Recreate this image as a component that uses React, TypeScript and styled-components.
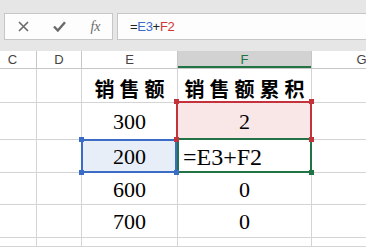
import React from 'react';
import styled, {createGlobalStyle} from 'styled-components';

const GlobalStyle = createGlobalStyle`
  html, body {
    margin: 0;
    padding: 0;
    background: #fff;
    overflow: hidden;
  }
  body {
    font-family: "Liberation Sans", Arial, sans-serif;
  }
`;

const Window = styled.div`
  width: 366px;
  height: 247px;
  overflow: hidden;
  display: flex;
  flex-direction: column;
  background: #fff;
`;

const FormulaBar = styled.div`
  display: flex;
  gap: 4px;
  padding: 13px 0 11px 4px;
  background: #e6e6e6;
`;

const IconBox = styled.div`
  width: 109px;
  height: 27px;
  box-sizing: border-box;
  border: 1px solid #c6c6c6;
  background: #fdfdfd;
  display: flex;
  align-items: center;
  gap: 24px;
  padding-left: 12px;
`;

const IconSlot = styled.span<{ $w: number }>`
  width: ${p => p.$w}px;
  display: flex;
  align-items: center;
  justify-content: center;
  color: #6a6a6a;
`;

const Fx = styled.span`
  font-family: "Liberation Serif", "Times New Roman", serif;
  font-style: italic;
  font-size: 14px;
  color: #6a6a6a;
`;

const FormulaInput = styled.div`
  flex: 1;
  height: 27px;
  box-sizing: border-box;
  border: 1px solid #c6c6c6;
  border-right: none;
  background: #fdfdfd;
  display: flex;
  align-items: center;
  padding-left: 12px;
  font-size: 13px;
  letter-spacing: -0.3px;
  color: #222;
`;

const Ref = styled.span<{ $color: string }>`
  color: ${p => p.$color};
`;

const Sheet = styled.div`
  display: grid;
  grid-template-columns: 48px 45px 96px 134px 100px;
  grid-template-rows: 18px 34px 37px 33px 32px 33px 1fr;
  margin-left: -11px;
  flex: 1;
`;

const ColHeader = styled.div<{ $active?: boolean }>`
  box-sizing: border-box;
  display: flex;
  align-items: center;
  justify-content: center;
  font-size: 13px;
  color: ${p => (p.$active ? '#217346' : '#444')};
  background: ${p => (p.$active ? '#d2d2d2' : '#fff')};
  border-right: 1px solid #c6c6c6;
  border-bottom: 1px solid #c6c6c6;
  box-shadow: ${p => (p.$active ? 'inset 0 -2px 0 #217346' : 'none')};
`;

const Cell = styled.div<{ $fill?: string; $edit?: boolean; $head?: boolean }>`
  position: relative;
  box-sizing: border-box;
  display: flex;
  align-items: center;
  justify-content: ${p => (p.$edit ? 'flex-start' : 'center')};
  padding: ${p => (p.$head ? '5px 0 0 5px' : p.$edit ? '2px 0 0 5px' : '2px 0 0 0')};
  background: ${p => p.$fill || '#fff'};
  border-right: 1px solid #d4d4d4;
  border-bottom: 1px solid #d4d4d4;
  font-family: ${p =>
    p.$head
      ? '"Liberation Serif", "Noto Sans CJK SC", serif'
      : '"Liberation Serif", "Times New Roman", serif'};
  font-weight: ${p => (p.$head ? 700 : 400)};
  font-size: ${p => (p.$head ? '20px' : p.$edit ? '24px' : '22px')};
  letter-spacing: ${p => (p.$head ? '5px' : 'normal')};
  color: #000;
  white-space: nowrap;
`;

const Selection = styled.div<{ $color: string; $t: number; $l: number; $r: number; $b: number }>`
  position: absolute;
  top: ${p => p.$t}px;
  left: ${p => p.$l}px;
  right: ${p => p.$r}px;
  bottom: ${p => p.$b}px;
  border: 2px solid ${p => p.$color};
  pointer-events: none;
`;

const Handle = styled.span<{ $color: string; $corner: 'tl' | 'tr' | 'bl' | 'br'; $z: number }>`
  position: absolute;
  width: 5px;
  height: 5px;
  background: ${p => p.$color};
  z-index: ${p => p.$z};
  ${p => (p.$corner[0] === 't' ? 'top: -4px;' : 'bottom: -4px;')}
  ${p => (p.$corner[1] === 'l' ? 'left: -4px;' : 'right: -4px;')}
`;

const RED = '#c4323c';
const BLUE = '#3a6cc6';
const GREEN = '#217346';

type Sel = { color: string; t: number; l: number; r: number; b: number; corners: ('tl' | 'tr' | 'bl' | 'br')[]; z: number };

const redSel: Sel = { color: RED, t: -2, l: -2, r: -1, b: -1, corners: ['tl', 'tr', 'bl', 'br'], z: 6 };
const blueSel: Sel = { color: BLUE, t: -1, l: -1, r: 0, b: -1, corners: ['tl', 'tr', 'bl', 'br'], z: 5 };
const greenSel: Sel = { color: GREEN, t: -2, l: -1, r: -1, b: -1, corners: ['br'], z: 7 };

type Row = { e: string; f: string; head?: boolean; eFill?: string; fFill?: string; eSel?: Sel; fSel?: Sel; edit?: boolean };

const rows: Row[] = [
    { e: '销售额', f: '销售额累积', head: true },
    { e: '300', f: '2', fFill: '#f9e7e8', fSel: redSel },
    { e: '200', f: '=E3+F2', eFill: '#e8eef8', eSel: blueSel, fSel: greenSel, edit: true },
    { e: '600', f: '0' },
    { e: '700', f: '0' },
    { e: '', f: '' },
];

const SelBox = ({ s }: { s: Sel }) => (
    <Selection $color={s.color} $t={s.t} $l={s.l} $r={s.r} $b={s.b}>
        {s.corners.map(c => (
            <Handle key={c} $color={s.color} $corner={c} $z={s.z} />
        ))}
    </Selection>
);

const App = () => {
    return (
        <Window>
            <GlobalStyle/>
            <FormulaBar>
                <IconBox>
                    <IconSlot $w={12}>
                        <svg width="11" height="11" viewBox="0 0 11 11">
                            <path d="M1 1 L10 10 M10 1 L1 10" stroke="#6a6a6a" strokeWidth="1.6" fill="none"/>
                        </svg>
                    </IconSlot>
                    <IconSlot $w={13}>
                        <svg width="13" height="11" viewBox="0 0 13 11">
                            <path d="M1 5.5 L4.8 9.5 L12 1.2" stroke="#6a6a6a" strokeWidth="2.4" fill="none"/>
                        </svg>
                    </IconSlot>
                    <IconSlot $w={11}>
                        <Fx>fx</Fx>
                    </IconSlot>
                </IconBox>
                <FormulaInput>
                    =<Ref $color={BLUE}>E3</Ref>+<Ref $color="#d13438">F2</Ref>
                </FormulaInput>
            </FormulaBar>

            <Sheet>
                <ColHeader>C</ColHeader>
                <ColHeader>D</ColHeader>
                <ColHeader>E</ColHeader>
                <ColHeader $active>F</ColHeader>
                <ColHeader>G</ColHeader>

                {rows.map((r, i) => (
                    <React.Fragment key={i}>
                        <Cell/>
                        <Cell/>
                        <Cell $head={r.head} $fill={r.eFill}>
                            {r.e}
                            {r.eSel && <SelBox s={r.eSel}/>}
                        </Cell>
                        <Cell $head={r.head} $fill={r.fFill} $edit={r.edit}>
                            {r.f}
                            {r.fSel && <SelBox s={r.fSel}/>}
                        </Cell>
                        <Cell/>
                    </React.Fragment>
                ))}
            </Sheet>
        </Window>
    );
};

export default App;
